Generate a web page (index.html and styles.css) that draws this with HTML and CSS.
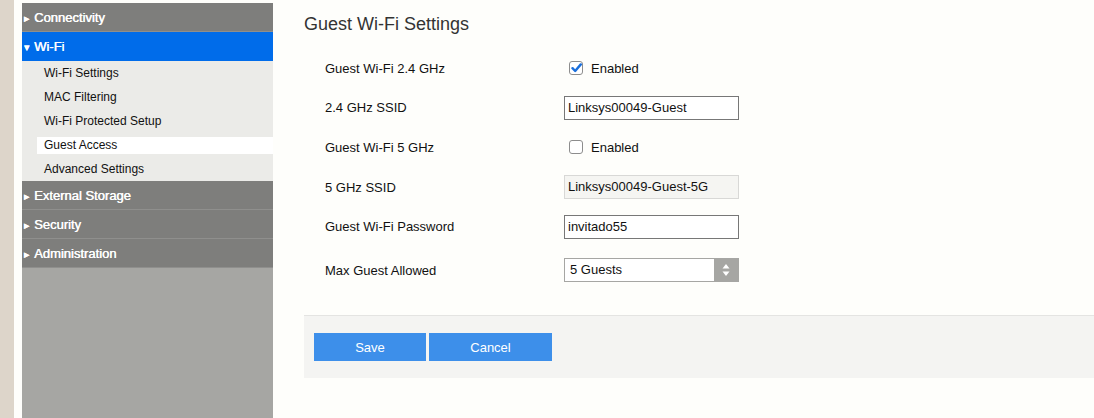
FILE: index.html
```html
<!DOCTYPE html>
<html>
<head>
<meta charset="utf-8">
<link rel="stylesheet" href="styles.css">
</head>
<body>
<div class="page">
  <div class="strip"></div>
  <nav class="sidebar">
    <div class="nav-head"><span class="arrow">&#9656;</span>Connectivity</div>
    <div class="nav-head active"><span class="arrow">&#9662;</span>Wi-Fi</div>
    <ul class="submenu">
      <li><span class="sub-link">Wi-Fi Settings</span></li>
      <li><span class="sub-link">MAC Filtering</span></li>
      <li><span class="sub-link">Wi-Fi Protected Setup</span></li>
      <li><span class="sub-link current">Guest Access</span></li>
      <li><span class="sub-link">Advanced Settings</span></li>
    </ul>
    <div class="nav-head"><span class="arrow">&#9656;</span>External Storage</div>
    <div class="nav-head"><span class="arrow">&#9656;</span>Security</div>
    <div class="nav-head"><span class="arrow">&#9656;</span>Administration</div>
    <div class="nav-fill"></div>
  </nav>
  <main class="main">
    <h1 class="title">Guest Wi-Fi Settings</h1>
    <div class="form">
      <div class="row">
        <div class="label">Guest Wi-Fi 2.4 GHz</div>
        <div class="control">
          <span class="check checked"><svg width="11" height="10" viewBox="0 0 11 10"><path d="M1.5 5.2 L4.2 8 L9.8 1.4" fill="none" stroke="#1a6fdc" stroke-width="2.4" stroke-linecap="round" stroke-linejoin="round"/></svg></span>
          <span class="check-text">Enabled</span>
        </div>
      </div>
      <div class="row">
        <div class="label">2.4 GHz SSID</div>
        <div class="control"><div class="input">Linksys00049-Guest</div></div>
      </div>
      <div class="row">
        <div class="label">Guest Wi-Fi 5 GHz</div>
        <div class="control">
          <span class="check"></span>
          <span class="check-text">Enabled</span>
        </div>
      </div>
      <div class="row">
        <div class="label">5 GHz SSID</div>
        <div class="control"><div class="input disabled">Linksys00049-Guest-5G</div></div>
      </div>
      <div class="row">
        <div class="label">Guest Wi-Fi Password</div>
        <div class="control"><div class="input">invitado55</div></div>
      </div>
      <div class="row row-select">
        <div class="label">Max Guest Allowed</div>
        <div class="control">
          <div class="select">
            <span class="select-value">5 Guests</span>
            <span class="select-btn"><svg width="8" height="14" viewBox="0 0 8 14"><path d="M4 1 L7.5 5.5 L0.5 5.5 Z" fill="#fff"/><path d="M4 13 L7.5 8.5 L0.5 8.5 Z" fill="#fff"/></svg></span>
          </div>
        </div>
      </div>
    </div>
    <div class="footer">
      <button class="btn btn-save">Save</button>
      <button class="btn btn-cancel">Cancel</button>
    </div>
  </main>
</div>
</body>
</html>
```

FILE: styles.css
```css
html, body {
  margin: 0;
  padding: 0;
  background: #fefefb;
  font-family: "Liberation Sans", Arial, sans-serif;
  color: #1a1a1a;
}

.page {
  display: flex;
  height: 418px;
  overflow: hidden;
}

.strip {
  width: 14px;
  flex: none;
  background: #ddd5ca;
  margin-right: 8px;
}

.sidebar {
  width: 251px;
  flex: none;
  display: flex;
  flex-direction: column;
  padding-top: 3px;
}

.nav-head {
  height: 28px;
  line-height: 30px;
  overflow: hidden;
  background: #7e7e7c;
  color: #fff;
  font-size: 13px;
  font-weight: normal;
  padding-left: 2px;
  border-bottom: 1px solid #8f8f8d;
  white-space: nowrap;
  text-shadow: 0.4px 0 0 #fff;
}

.nav-head.active {
  background: #006cea;
  border-bottom-color: #006cea;
}

.arrow {
  display: inline-block;
  width: 10px;
  font-size: 11px;
  vertical-align: top;
}

.submenu {
  list-style: none;
  margin: 0;
  padding: 0;
  background: #ebebe8;
}

.submenu li {
  height: 24px;
  display: flex;
  align-items: center;
}

.sub-link {
  display: block;
  flex: 1;
  margin-left: 15px;
  padding-left: 7px;
  height: 17px;
  line-height: 17px;
  font-size: 12px;
  color: #111;
}

.sub-link.current {
  background: #fff;
}

.nav-fill {
  flex: 1;
  background: #a6a6a3;
}

.main {
  flex: 1;
  padding-left: 31px;
  padding-top: 13px;
}

.title {
  margin: 0;
  font-size: 18px;
  line-height: 22px;
  font-weight: normal;
  color: #333;
}

.form {
  margin-top: 21px;
  padding-left: 21px;
  display: flex;
  flex-direction: column;
  gap: 15.7px;
}

.row {
  display: flex;
  align-items: center;
  height: 24px;
}

.row-select {
  margin-top: 4px;
}

.label {
  width: 239px;
  font-size: 13px;
  color: #111;
}

.control {
  display: flex;
  align-items: center;
}

.check {
  width: 12px;
  height: 12px;
  border: 1px solid #8d8d8d;
  border-radius: 3px;
  background: #fff;
  margin-left: 5px;
  margin-right: 8px;
  display: flex;
  align-items: center;
  justify-content: center;
}

.check-text {
  font-size: 13px;
  color: #111;
}

.input {
  width: 170px;
  height: 22px;
  line-height: 22px;
  border: 1px solid #777;
  padding-left: 3px;
  font-size: 13px;
  color: #111;
  background: #fff;
}

.input.disabled {
  background: #f5f5f2;
  border-color: #d8d8d6;
}

.select {
  display: flex;
  width: 173px;
  height: 22px;
  border: 1px solid #a6a6a3;
  background: #fff;
}

.select-value {
  flex: 1;
  line-height: 22px;
  font-size: 13px;
  padding-left: 5px;
  color: #111;
}

.select-btn {
  width: 24px;
  background: #a6a6a3;
  display: flex;
  align-items: center;
  justify-content: center;
}

.footer {
  margin-top: 33px;
  border-top: 1px solid #e4e4e2;
  background: #f4f4f2;
  padding: 17px 0 17px 10px;
  display: flex;
  gap: 3px;
}

.btn {
  height: 28px;
  border: none;
  background: #3d8fea;
  color: #fff;
  font-family: "Liberation Sans", Arial, sans-serif;
  font-size: 13px;
  padding: 0;
}

.btn-save {
  width: 112px;
}

.btn-cancel {
  width: 123px;
}
```
